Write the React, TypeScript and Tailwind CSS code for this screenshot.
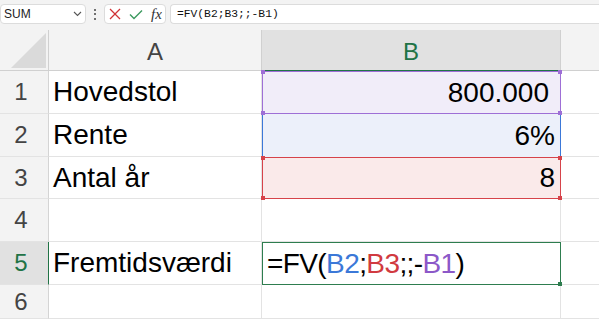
import React from "react";

function Handle({ pos, color }: { pos: string; color: string }) {
  return <span className={`absolute w-[4px] h-[4px] ${pos} ${color}`} />;
}

export default function App() {
  const rowHead =
    "bg-[#f3f3f3] border-r border-b border-r-[#d4d4d4] border-b-[#e3e3e3] flex items-center justify-center pr-[6px] text-[24px] leading-[28px] text-[#444]";
  const cellA =
    "border-r border-b border-[#e3e3e3] flex items-center pl-[4px] text-[28px] leading-[28px] text-black";
  const cellB = "border-b border-[#e3e3e3] flex items-center text-[28px] leading-[28px] text-black";
  const cellC = "border-b border-[#e3e3e3]";
  return (
    <div className="w-[599px] h-[319px] overflow-hidden bg-white font-['Liberation_Sans',Arial,sans-serif]">
      {/* Formula bar */}
      <div className="h-[30px] bg-[#f3f3f3] flex items-start pt-[4px]">
        <div className="w-[86px] h-[20px] bg-white border border-[#dcdcdc] rounded-[4px] flex items-center pl-[3px] pr-[3px] text-[12px] text-[#222]">
          <span>SUM</span>
          <svg className="ml-auto" width="9" height="6" viewBox="0 0 9 6">
            <polyline points="1,1 4.5,4.5 8,1" fill="none" stroke="#555" strokeWidth="1.1" />
          </svg>
        </div>
        <div className="w-[18px] h-[20px] flex flex-col items-center justify-center gap-[2.5px]">
          <span className="w-[2px] h-[2px] rounded-full bg-[#444]" />
          <span className="w-[2px] h-[2px] rounded-full bg-[#444]" />
          <span className="w-[2px] h-[2px] rounded-full bg-[#444]" />
        </div>
        <div className="w-[62px] h-[20px] bg-white border border-[#dcdcdc] rounded-[4px] flex items-center pl-[4px]">
          <svg width="12" height="12" viewBox="0 0 12 12">
            <line x1="1" y1="1" x2="11" y2="11" stroke="#d13438" strokeWidth="1.3" />
            <line x1="11" y1="1" x2="1" y2="11" stroke="#d13438" strokeWidth="1.3" />
          </svg>
          <svg className="ml-[8px]" width="14" height="11" viewBox="0 0 14 11">
            <polyline points="1,5.5 5,9.5 13,1.5" fill="none" stroke="#3c9a5f" strokeWidth="1.4" />
          </svg>
          <span className="ml-[8px] font-['Liberation_Serif',serif] italic text-[15px] leading-[15px] text-[#333]">fx</span>
        </div>
        <div className="flex-1 ml-[4px] h-[20px] bg-white border border-[#dcdcdc] rounded-l-[4px] border-r-0 flex items-center pl-[6px] font-['Liberation_Mono',monospace] text-[11.3px] text-[#111]">
          =FV(B2;B3;;-B1)
        </div>
      </div>

      {/* Grid */}
      <div className="grid grid-cols-[49px_213px_299px_38px] grid-rows-[41px_43px_43px_42px_43px_43px_34px]">
        {/* Header row */}
        <div className="bg-[#f3f3f3] border-r border-b border-[#d0d0d0] flex items-end justify-end pr-[2px] pb-[2px]">
          <svg width="35" height="35" viewBox="0 0 35 35">
            <polygon points="35,0 35,35 0,35" fill="#dadada" />
          </svg>
        </div>
        <div className="bg-[#f3f3f3] border-r border-b border-[#d0d0d0] flex items-center justify-center pt-[3px] text-[24px] text-[#444]">
          A
        </div>
        <div className="bg-[#e1e1e1] border-r border-r-[#d0d0d0] border-b border-b-[#217346] flex items-center justify-center pt-[3px] text-[24px] text-[#217346]">
          B
        </div>
        <div className="bg-[#f3f3f3] border-b border-[#d0d0d0]" />

        {/* Row 1 */}
        <div className={rowHead}>1</div>
        <div className={cellA}>Hovedstol</div>
        <div className="relative bg-[#f1edf9] border border-[#9e6fd6] flex items-center justify-end pr-[11px] text-[28px] leading-[28px] text-black">
          800.000
          <Handle pos="-left-[2px] -top-[2px]" color="bg-[#9e6fd6]" />
          <Handle pos="-right-[2px] -top-[2px]" color="bg-[#9e6fd6]" />
          <Handle pos="-left-[2px] -bottom-[2px]" color="bg-[#9e6fd6]" />
          <Handle pos="-right-[2px] -bottom-[2px]" color="bg-[#9e6fd6]" />
        </div>
        <div className={cellC} />

        {/* Row 2 */}
        <div className={rowHead}>2</div>
        <div className={cellA}>Rente</div>
        <div className="bg-[#ecf0fa] border-x border-[#3b78d8] flex items-center justify-end pr-[5px] text-[28px] leading-[28px] text-black">
          6%
        </div>
        <div className={cellC} />

        {/* Row 3 */}
        <div className={rowHead}>3</div>
        <div className={cellA}>Antal år</div>
        <div className="relative bg-[#faeaea] border border-[#d6434a] flex items-center justify-end pr-[5px] text-[28px] leading-[28px] text-black">
          8
          <Handle pos="-left-[2px] -top-[2px]" color="bg-[#d6434a]" />
          <Handle pos="-right-[2px] -top-[2px]" color="bg-[#d6434a]" />
          <Handle pos="-left-[2px] -bottom-[2px]" color="bg-[#d6434a]" />
          <Handle pos="-right-[2px] -bottom-[2px]" color="bg-[#d6434a]" />
        </div>
        <div className={cellC} />

        {/* Row 4 */}
        <div className={rowHead}>4</div>
        <div className={cellA} />
        <div className={cellB + " border-r"} />
        <div className={cellC} />

        {/* Row 5 */}
        <div className="bg-[#e1e1e1] border-r border-b border-r-[#217346] border-b-[#e3e3e3] flex items-center justify-center pr-[6px] text-[24px] leading-[28px] text-[#217346]">
          5
        </div>
        <div className={cellA}>Fremtidsværdi</div>
        <div className="relative border-[1.5px] border-[#2e7d4f] flex items-center pl-[4px] text-[28px] leading-[28px] text-black tracking-[-0.6px]">
          <span>
            =FV(<span className="text-[#3b78d8]">B2</span>;<span className="text-[#d13a40]">B3</span>;;-<span className="text-[#8c58c8]">B1</span>)
          </span>
          <Handle pos="-right-[2px] -bottom-[2px]" color="bg-[#2e7d4f]" />
        </div>
        <div className={cellC} />

        {/* Row 6 */}
        <div className={rowHead}>6</div>
        <div className={cellA} />
        <div className={cellB + " border-r"} />
        <div className={cellC} />
      </div>
    </div>
  );
}
